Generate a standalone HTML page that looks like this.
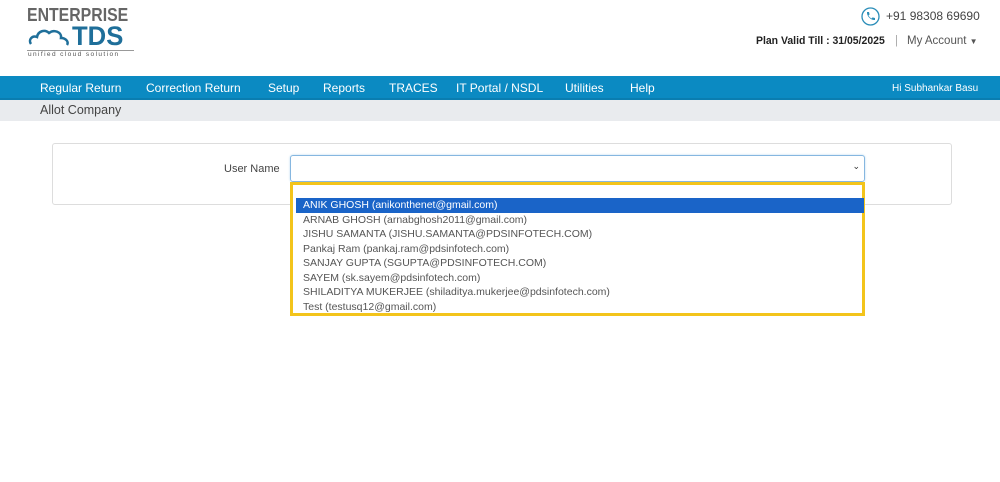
<!DOCTYPE html>
<html><head><meta charset="utf-8"><style>
*{margin:0;padding:0;box-sizing:border-box}
body{width:1000px;height:482px;background:#fff;font-family:"Liberation Sans",sans-serif;position:relative;overflow:hidden;color:#333}
.abs{position:absolute}
.nav{left:0;top:76px;width:1000px;height:24px;background:#0b8ac2;border-bottom:2px solid #0a7db0}
.nav span{position:absolute;top:5px;color:#fff;font-size:12px}
.sub{left:0;top:100px;width:1000px;height:21px;background:#e9ebee}
.opt{position:absolute;left:3px;width:568px;height:14.5px;font-size:10.5px;color:#555;padding-left:7px;line-height:14.5px;white-space:nowrap}
</style></head><body>
<div class="abs" style="left:27px;top:5px;font-size:18px;font-weight:bold;color:#666;transform:scaleX(0.88);transform-origin:left">ENTERPRISE</div>
<svg class="abs" style="left:28px;top:26px" width="46" height="22" viewBox="0 0 46 22"><path d="M3 18 C0 14 4 9 9 11 C10 5 17 3 21 7 C26 3 34 6 33 12 C38 12 41 16 39 19" fill="none" stroke="#1f6f9a" stroke-width="2.5"/></svg>
<div class="abs" style="left:72px;top:21px;font-size:27px;font-weight:bold;color:#1f6f9a;transform:scaleX(0.95);transform-origin:left">TDS</div>
<div class="abs" style="left:27px;top:50px;width:107px;border-top:1px solid #999"></div>
<div class="abs" style="left:28px;top:51px;font-size:6.5px;color:#555;letter-spacing:1.4px">unified cloud solution</div>
<svg class="abs" style="left:861px;top:7px" width="19" height="19" viewBox="0 0 19 19"><circle cx="9.5" cy="9.5" r="8.5" fill="none" stroke="#2a8db8" stroke-width="1.3"/><path d="M6 5 L8 5 L8.6 7.5 L7.5 8.3 C8.3 10 9 10.7 10.7 11.5 L11.5 10.4 L14 11 L14 13 C10 13.5 5.5 9 6 5Z" fill="#2a8db8"/></svg>
<div class="abs" style="left:886px;top:9px;font-size:12px;color:#444">+91 98308 69690</div>
<div class="abs" style="left:756px;top:35px;font-size:11px;color:#222;font-weight:bold;transform:scaleX(0.95);transform-origin:left">Plan Valid Till : 31/05/2025</div>
<div class="abs" style="left:895px;top:35px;font-size:11.5px;color:#aaa">|</div>
<div class="abs" style="left:907px;top:35px;font-size:11.5px;color:#555">My Account <span style="font-size:8px">▼</span></div>
<div class="abs nav">
<span style="left:40px">Regular Return</span><span style="left:146px">Correction Return</span><span style="left:268px">Setup</span><span style="left:323px">Reports</span><span style="left:389px">TRACES</span><span style="left:456px">IT Portal / NSDL</span><span style="left:565px">Utilities</span><span style="left:630px">Help</span><span style="left:892px;font-size:10px;top:7px">Hi Subhankar Basu</span>
</div>
<div class="abs sub"><span style="position:absolute;left:40px;top:3px;font-size:12.5px;color:#444">Allot Company</span></div>
<div class="abs" style="left:52px;top:143px;width:900px;height:62px;border:1px solid #ddd;border-radius:3px"></div>
<div class="abs" style="left:224px;top:163px;font-size:11px;color:#444">User Name</div>
<div class="abs" style="left:290px;top:155px;width:575px;height:27px;border:1px solid #86b7e0;border-radius:3px;box-shadow:0 0 2px #b8d8f0"><span style="position:absolute;right:4px;top:5px;font-size:9px;color:#333">&#8964;</span></div>
<div class="abs" style="left:290px;top:182px;width:575px;height:134px;border:3px solid #f3c41b;background:#fff">
<div class="opt" style="top:13px;background:#1a64c8;color:#fff">ANIK GHOSH (anikonthenet@gmail.com)</div>
<div class="opt" style="top:27.5px">ARNAB GHOSH (arnabghosh2011@gmail.com)</div>
<div class="opt" style="top:42px">JISHU SAMANTA (JISHU.SAMANTA@PDSINFOTECH.COM)</div>
<div class="opt" style="top:56.5px">Pankaj Ram (pankaj.ram@pdsinfotech.com)</div>
<div class="opt" style="top:71px">SANJAY GUPTA (SGUPTA@PDSINFOTECH.COM)</div>
<div class="opt" style="top:85.5px">SAYEM (sk.sayem@pdsinfotech.com)</div>
<div class="opt" style="top:100px">SHILADITYA MUKERJEE (shiladitya.mukerjee@pdsinfotech.com)</div>
<div class="opt" style="top:114.5px">Test (testusq12@gmail.com)</div>
</div>
</body></html>
